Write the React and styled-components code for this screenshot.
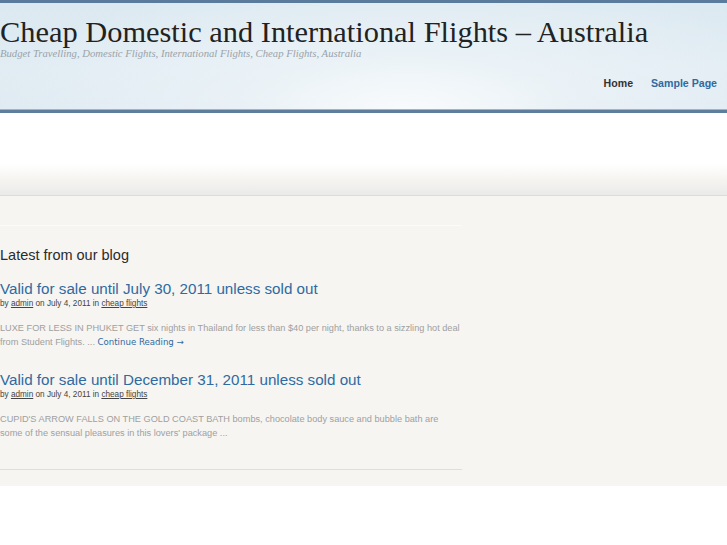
import React from "react";
import styled, { createGlobalStyle } from "styled-components";

const Global = createGlobalStyle`
  html, body { margin: 0; padding: 0; background: #fff; }
  body { font-family: "Liberation Sans", Arial, sans-serif; }
  a { text-decoration: none; }
`;

const Header = styled.header`
  height: 107px;
  border-top: 3px solid #5b7b9c;
  border-bottom: 3px solid #5f7e9d;
  box-shadow: inset 0 -1px 0 #9fb5c8;
  background:
    radial-gradient(ellipse 420px 140px at 56% 100%, rgba(250,252,253,0.95) 0%, rgba(240,246,249,0.6) 40%, rgba(220,233,241,0) 100%),
    linear-gradient(180deg, #dce9f1 0%, #e1ecf3 60%, #dfeaf2 100%);
  display: flex;
  flex-direction: column;
`;

const Title = styled.h1`
  margin: 14px 0 0;
  font-family: "Liberation Serif", "Times New Roman", serif;
  font-weight: normal;
  font-size: 30.4px;
  line-height: 30px;
  color: #222;
`;

const Tagline = styled.div`
  font-family: "Liberation Serif", "Times New Roman", serif;
  font-style: italic;
  font-size: 10.7px;
  line-height: 12px;
  color: #9aa3aa;
`;

const Nav = styled.nav`
  margin-top: 17px;
  display: flex;
  justify-content: flex-end;
  gap: 18px;
  padding-right: 10px;
`;

const NavLink = styled.a`
  font-size: 10.6px;
  font-weight: bold;
  line-height: 14px;
  color: ${(p) => (p.$active ? "#333" : "#2f6aa0")};
`;

const Spacer = styled.div`
  height: 82px;
  background: linear-gradient(180deg, #fff 0%, #fff 62%, #f6f5f2 80%, #ebebea 98%);
  border-bottom: 1px solid #dcdcdb;
`;

const Main = styled.main`
  background: #f6f5f2;
  padding: 29px 0 16px;
`;

const Column = styled.div`
  width: 462px;
  border-top: 1px solid #fbfbfa;
`;

const SectionTitle = styled.h2`
  margin: 19px 0 0;
  font-size: 14.5px;
  font-weight: normal;
  line-height: 20px;
  color: #2b2b2b;
`;

const Post = styled.article`
  margin-top: ${(p) => (p.$first ? "14px" : "21px")};
`;

const PostTitle = styled.a`
  display: block;
  font-size: 15.2px;
  line-height: 19px;
  color: #2f6aa0;
`;

const Meta = styled.div`
  font-size: 8.2px;
  line-height: 11px;
  color: #444;
  a { color: #444; text-decoration: underline; }
`;

const Excerpt = styled.p`
  margin: 12px 0 0;
  font-size: 9.2px;
  line-height: 14px;
  color: #a0a0a0;
  a { color: #2f6aa0; font-family: "DejaVu Sans", "Liberation Sans", sans-serif; font-size: 8.6px; line-height: 1; }
`;

const Divider = styled.hr`
  margin: 29px 0 0;
  border: none;
  border-top: 1px solid #dedede;
`;

export default function App() {
  return (
    <>
      <Global />
      <Header>
        <Title>Cheap Domestic and International Flights – Australia</Title>
        <Tagline>Budget Travelling, Domestic Flights, International Flights, Cheap Flights, Australia</Tagline>
        <Nav>
          <NavLink $active href="#">Home</NavLink>
          <NavLink href="#">Sample Page</NavLink>
        </Nav>
      </Header>
      <Spacer />
      <Main>
        <Column>
          <SectionTitle>Latest from our blog</SectionTitle>
          <Post $first>
            <PostTitle href="#">Valid for sale until July 30, 2011 unless sold out</PostTitle>
            <Meta>by <a href="#">admin</a> on July 4, 2011 in <a href="#">cheap flights</a></Meta>
            <Excerpt>
              LUXE FOR LESS IN PHUKET GET six nights in Thailand for less than $40 per night, thanks to a sizzling hot deal from Student Flights. ... <a href="#">Continue Reading →</a>
            </Excerpt>
          </Post>
          <Post>
            <PostTitle href="#">Valid for sale until December 31, 2011 unless sold out</PostTitle>
            <Meta>by <a href="#">admin</a> on July 4, 2011 in <a href="#">cheap flights</a></Meta>
            <Excerpt>
              CUPID'S ARROW FALLS ON THE GOLD COAST BATH bombs, chocolate body sauce and bubble bath are some of the sensual pleasures in this lovers' package ...
            </Excerpt>
          </Post>
          <Divider />
        </Column>
      </Main>
    </>
  );
}
